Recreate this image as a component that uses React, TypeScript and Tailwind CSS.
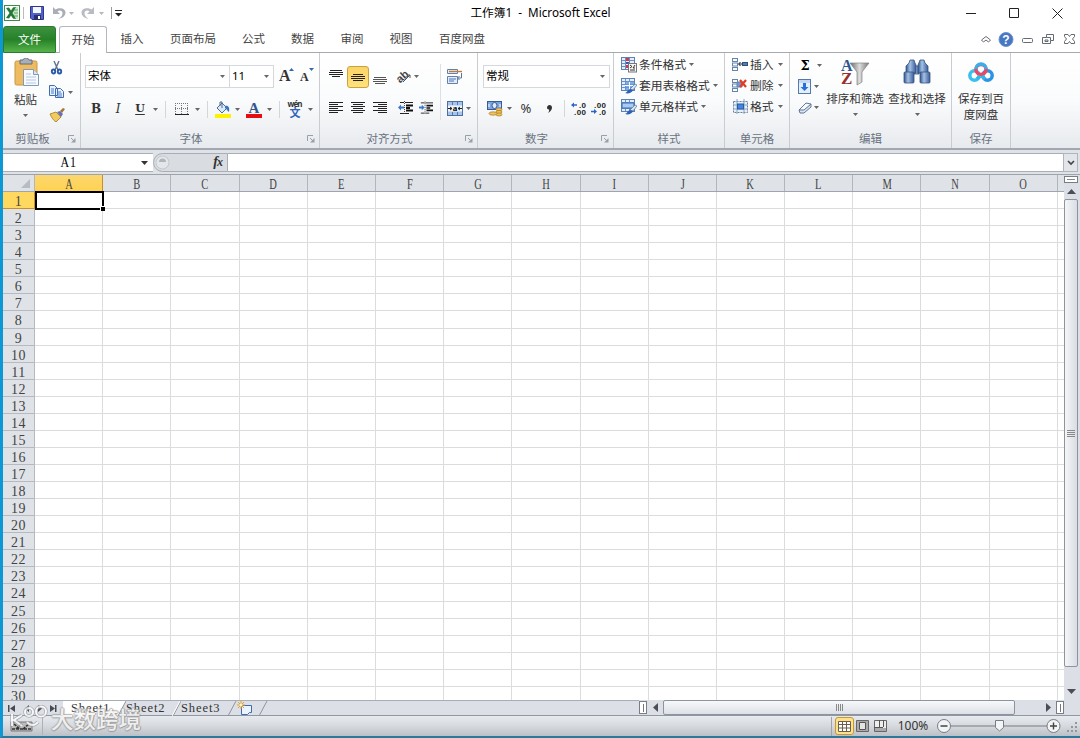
import React from 'react';

const columns = ['A', 'B', 'C', 'D', 'E', 'F', 'G', 'H', 'I', 'J', 'K', 'L', 'M', 'N', 'O'];
const rows = Array.from({ length: 30 }, (_, i) => i + 1);
const ui = "font-['Noto_Sans','Noto_Sans_CJK_SC',sans-serif]";
const song = "font-['Liberation_Serif','Noto_Sans_CJK_SC',serif]";

type BoxProps = { className?: string; children?: React.ReactNode };

const Cell = ({ className = '', children }: BoxProps) => (
    <div className={`flex shrink-0 items-center justify-center ${className}`}>{children}</div>
);

const Arrow = ({ className = 'w-[9px]', color = '#666' }: { className?: string; color?: string }) => (
    <Cell className={className}>
        <svg width="5" height="3" viewBox="0 0 5 3"><path d="M0 0h5L2.500 3z" fill={color} /></svg>
    </Cell>
);

const Sep = ({ className = 'w-[12px]' }: BoxProps) => (
    <Cell className={className}><div className="h-[17px] w-px bg-[#d3d6da]" /></Cell>
);

const Group = ({ className = '', label, launcher, children }: BoxProps & { label: string; launcher?: boolean }) => (
    <div className={`flex h-full shrink-0 flex-col border-r border-[#c9cdd2] ${className}`}>
        <div className="h-[77px]">{children}</div>
        <div className="flex h-[18px] items-center text-[11.5px] leading-none text-[#6a7380]">
            <div className="flex-1 text-center">{label}</div>
            {launcher && (
                <div className="w-[18px] pl-[6px]">
                    <svg width="8" height="8" viewBox="0 0 8 8" fill="none" stroke="#9aa0a8">
                        <path d="M.5 6V.5H6M3 3l3 3" /><path d="M7.500 3v4.500H3z" fill="#9aa0a8" stroke="none" />
                    </svg>
                </div>
            )}
        </div>
    </div>
);

const Combo = ({ className = '', text }: { className?: string; text: string }) => (
    <div className={`flex h-[23px] shrink-0 items-center border border-[#d5d9de] bg-white pl-[2px] text-[11.5px] text-black ${className}`}>
        <span className="flex-1 pb-[2px]">{text}</span>
        <Arrow className="w-[13px]" />
    </div>
);

// Horizontal strokes used by all paragraph alignment buttons
const Lines = ({ bars, color = '#222' }: { bars: number[][]; color?: string }) => (
    <svg width="14" height="14" viewBox="0 0 14 14" shapeRendering="crispEdges">
        {bars.map(([x, w, y], i) => <rect key={i} x={x} y={y} width={w} height="1" fill={color} />)}
    </svg>
);

const Indent = ({ flip }: { flip?: boolean }) => (
    <svg width="15" height="14" viewBox="0 0 15 14">
        <path d="M2 1.500h4M7 1.500h8M2 12.500h4M7 12.500h4" stroke="#222" />
        <path d="M8 4.500h7M8 7h4M8 9.500h7" stroke="#111" strokeWidth="1.800" />
        <path d="M6.500 0v14" stroke="#444" strokeDasharray="1 1" />
        <path d={flip ? 'M6 6.500 3 3.500v2H0v2h3v2z' : 'M0 6.500 3 3.500v2h3v2H3v2z'} fill="#3976d0" />
    </svg>
);

const TableBase = () => (
    <g>
        <rect x=".5" y=".5" width="13" height="12" fill="#e5effc" stroke="#5f82b6" />
        <path d="M1 3.500h12M1 6.500h12M1 9.500h12M4.500 1v11M8.500 1v11" stroke="#6b90c8" />
    </g>
);

const StyleIcon = ({ kind }: { kind: number }) => (
    <svg width="16" height="16" viewBox="0 0 16 16">
        <TableBase />
        {kind === 0 && <g><path d="M5 1h3v3H5zM5 8h3v3H5z" fill="#cf3b4b" /><path d="M5 5h3v2H5z" fill="#315eaa" /><rect x="7.500" y="6.500" width="8" height="8.500" fill="#f7f7f7" stroke="#777" /><path d="m9 8 2 1.500L9 11m5-3-2 3 2 0M9 13h5" fill="none" stroke="#333" /></g>}
        {kind === 1 && <g><path d="M4 4h9v8H4z" fill="#5b97e2" opacity=".75" /><path d="M4 7.500h9M8.500 4v8" stroke="#fff" /></g>}
        {kind === 2 && <path d="M1 4h12v5H1z" fill="#a9caf3" stroke="#386ab0" />}
        {kind > 0 && <g><path d="m9 11 5-5 2 1-4 5z" fill="#dce5ef" stroke="#53749c" strokeWidth=".7" /><path d="M4 15c2 0 2-3 5-4l3 1c-1 3-5 4-8 3z" fill="#2b62b7" /></g>}
    </svg>
);

const CellsIcon = ({ kind }: { kind: number }) => (
    <svg width="17" height="15" viewBox="0 0 17 15">
        {kind < 2 ? (
            <g fill="#f8fbff" stroke="#6685ad">
                <rect x=".5" y="1.500" width="5" height="3" /><rect x=".5" y="6" width="5" height="3" /><rect x=".5" y="10.500" width="5" height="3" />
                {kind === 0
                    ? <g><rect x="10.500" y="5.500" width="5" height="3" fill="#5c7ca8" stroke="#2d4f80" /><path d="M10 7H7m1.500-2L6.500 7l2 2" fill="none" stroke="#111" /></g>
                    : <g><path d="M5 4h5v5H5z" fill="#7098cf" /><path d="m8 2 6 7m0-7L8 9" stroke="#e33a25" strokeWidth="2.200" /></g>}
            </g>
        ) : (
            <g><path d="M1.500 2.500h14v11h-14z" fill="#e6effa" stroke="#66819f" strokeDasharray="2 1" /><path d="M1 6h15M1 10h15M5 0v15M12 0v15" stroke="#8ba3c2" /><rect x="5.500" y="5" width="6" height="5" fill="#4386df" stroke="#285aa5" /></g>
        )}
    </svg>
);

const Decimals = ({ less }: { less?: boolean }) => (
    <svg width="16" height="15" viewBox="0 0 16 15">
        <path d={less ? 'M6 10.500 3 8v1.700H0v1.600h3V13z' : 'M0 4 3 1.500v1.700h3v1.600H3v1.700z'} fill="#2c65c4" />
        <g fill="#222" fontSize="8" fontWeight="bold" fontFamily="Liberation Sans">
            <text x={less ? 3 : 8} y="7" textLength={less ? 12 : 7}>{less ? '.00' : '.0'}</text>
            <text x={less ? 8 : 3} y="14" textLength={less ? 7 : 12}>{less ? '.0' : '.00'}</text>
        </g>
    </svg>
);

const TitleBar = () => (
    <div className="flex h-[26px] shrink-0 items-center">
        <div className="flex w-[400px] items-center pl-[1px]">
            <svg width="16" height="16" viewBox="0 0 16 16">
                <rect x=".5" y=".5" width="15" height="15" fill="#fff" stroke="#3f8c46" /><path d="M9 2h5v12H9z" fill="#c9e5c7" /><path d="M10 5h4M10 8h4M10 11h4" stroke="#67a767" />
                <path d="m2 3 3-.5 2 3 2-3 3-.5-3.500 6L12 14l-3-.5-2-3-2 3-3-.5 3.500-5z" fill="#217a36" />
            </svg>
            <div className="ml-[3px] h-[12px] w-px bg-[#bbb]" />
            <svg className="ml-[6px]" width="14" height="14" viewBox="0 0 14 14">
                <path d="M.5.500h13v13H2L.5 12z" fill="#5261c7" stroke="#30358c" /><path d="M3 1h8v6H3z" fill="#f2f7ff" /><path d="M4 9h7v5H4z" fill="#26306f" /><path d="M8 10h2v3H8z" fill="#fff" />
            </svg>
            <svg className="ml-[8px]" width="14" height="13" viewBox="0 0 14 13"><path d="M1 0v7h7L5.500 4.500c2-2 5-1 5 1.500 0 3-2 4-4 6 4-1 7-3 7-6.500C13.500 1 7 0 3.500 2.500z" fill="#a9aeb6" /></svg>
            <Arrow className="w-[11px]" color="#b5b8bd" />
            <svg className="ml-[4px] -scale-x-100" width="14" height="13" viewBox="0 0 14 13"><path d="M1 0v7h7L5.500 4.500c2-2 5-1 5 1.500 0 3-2 4-4 6 4-1 7-3 7-6.500C13.500 1 7 0 3.500 2.500z" fill="#b8bcc2" /></svg>
            <Arrow className="w-[13px]" color="#b5b8bd" />
            <div className="ml-[3px] h-[12px] w-px bg-[#999]" />
            <svg className="ml-[3px]" width="7" height="7" viewBox="0 0 7 7"><path d="M0 0h7v1H0zM0 3h7L3.500 6.500z" fill="#222" /></svg>
        </div>
        <div className="w-[275px] text-center text-[11.7px] text-black">工作簿1&nbsp; -&nbsp; Microsoft Excel</div>
        <svg className="ml-auto mr-[17px]" width="97" height="12" viewBox="0 0 97 12" fill="none" stroke="#222">
            <path d="M0 6.500h10M43.500 1.500h9v9h-9zM86.500 1.500l10 10m0-10-10 10" />
        </svg>
    </div>
);

const Tabs = () => (
    <div className="flex h-[27px] shrink-0 items-end text-[11.5px] text-[#444]">
        <div className="flex h-full w-[53px] items-center justify-center rounded-t-[3px] border border-[#287c2c] bg-linear-to-b from-[#3d9140] via-[#268129] to-[#55b349] text-white">文件</div>
        <div className="h-px w-[3px] bg-[#a5aab1]" />
        <div className="flex h-full w-[48px] items-center justify-center rounded-t-[3px] border border-b-0 border-[#b4b8be] bg-white">开始</div>
        <div className="flex h-full flex-1 items-center border-b border-[#a5aab1]">
            <Cell className="w-[50px]">插入</Cell>
            <Cell className="w-[72px]">页面布局</Cell>
            <Cell className="w-[49px]">公式</Cell>
            <Cell className="w-[49px]">数据</Cell>
            <Cell className="w-[50px]">审阅</Cell>
            <Cell className="w-[48px]">视图</Cell>
            <Cell className="w-[74px]">百度网盘</Cell>
            <svg className="ml-auto mr-[4px]" width="96" height="17" viewBox="0 0 96 17" fill="none" stroke="#666b73">
                <path d="M1.500 9 6 5.500 10.500 9l-2 2L6 9l-2.500 2z" />
                <circle cx="26" cy="8.500" r="7" fill="#4677c5" stroke="#6d92cb" />
                <text x="22.300" y="13" fill="#fff" stroke="none" fontSize="12" fontWeight="bold" fontFamily="Liberation Sans">?</text>
                <rect x="42.500" y="7.500" width="10" height="4" rx="1" />
                <path d="M66.500 3.500h7v6h-3v3h-8v-6h4zM66.500 6.500h4v3M65 9h3v1.500h-3z" />
                <path d="m84.500 3.500 3.500 0 1.500 2 1.500-2h3.500v2l-2 2.500 2 2.500v2h-3.500l-1.500-2-1.500 2h-3.500v-2l2-2.500-2-2.500z" />
            </svg>
        </div>
    </div>
);

const Ribbon = () => (
    <div className="flex h-[97px] shrink-0 border-b-2 border-[#a3a8b0] bg-linear-to-b from-white via-[#fafbfc] to-[#e7eaee] text-[#333]">
        <Group className="w-[78px]" label="剪贴板" launcher>
            <div className="flex">
                <div className="flex w-[45px] flex-col items-center pt-[5px]">
                    <svg className="ml-[3px]" width="27" height="30" viewBox="0 0 27 30">
                        <rect x="1" y="3" width="22" height="24" rx="1.500" fill="#efbb61" stroke="#c99747" />
                        <path d="M6 2h3c1-3 5-3 6 0h3v4H6z" fill="#a9afb7" stroke="#656d77" />
                        <path d="M9.500 11.500h10l5 5v11h-15z" fill="#f7faff" stroke="#8499b7" /><path d="M19.500 11.500v5h5" fill="#dbe7f5" stroke="#8499b7" />
                        <path d="M12 16h5m-5 3h10m-10 3h10m-10 3h10" stroke="#b3c6e1" />
                    </svg>
                    <span className="mt-[5px] text-[11.5px] leading-[14px]">粘贴</span>
                    <Arrow className="mt-[6px] h-[5px] w-[9px]" />
                </div>
                <div className="flex flex-1 flex-col pl-px pt-[7px]">
                    <svg className="ml-[1px]" width="14" height="16" viewBox="0 0 14 16" fill="none">
                        <path d="m4 1 4 9M9 1 5 10" stroke="#5e7290" strokeWidth="1.400" /><ellipse cx="3.500" cy="11.500" rx="1.700" ry="2" stroke="#2c59a8" strokeWidth="1.900" /><ellipse cx="9.500" cy="11.500" rx="1.700" ry="2" stroke="#2c59a8" strokeWidth="1.900" />
                    </svg>
                    <div className="mt-[9px] flex items-center">
                        <svg width="16" height="15" viewBox="0 0 16 15"><path d="M.5.500h5l3 3v7h-8zM6.500 3.500h5l3 3v6h-8z" fill="#e8f1ff" stroke="#416cad" /><path d="M2 4h3M2 6h3M2 8h3M8 7h4m-4 2h5m-5 2h5" stroke="#4b7bc3" /></svg>
                        <Arrow className="w-[11px]" />
                    </div>
                    <svg className="mt-[8px]" width="16" height="14" viewBox="0 0 16 14"><path d="m1 6 6-2 5 5-5 5C4 12 3 10 1 6z" fill="#efcc62" stroke="#b68b31" /><path d="m8 4 3-1 3 3-2 3z" fill="#6570b4" /><path d="m11 3 3-3 2 1-3 4z" fill="#a27435" /></svg>
                </div>
            </div>
        </Group>
        <Group className="w-[239px]" label="字体" launcher>
            <div className="flex h-[35px] items-end pl-[4px]">
                <Combo className="w-[145px]" text="宋体" />
                <Combo className="-ml-px w-[45px]" text="11" />
                <Cell className="h-[23px] w-[24px] pb-[3px]"><svg width="16" height="16" viewBox="0 0 16 16"><text x="1" y="14" fontSize="16" fontWeight="bold" fontFamily="Liberation Serif" fill="#333">A</text><path d="m11 4 2.500-3L16 4z" fill="#3567b1" /></svg></Cell>
                <Cell className="h-[23px] w-[17px] pb-[3px]"><svg width="16" height="16" viewBox="0 0 16 16"><text x="1" y="14" fontSize="12" fontWeight="bold" fontFamily="Liberation Serif" fill="#333">A</text><path d="m10 1 2.500 3L15 1z" fill="#3567b1" /></svg></Cell>
            </div>
            <div className="flex h-[42px] items-center pl-[4px]">
                <Cell className="w-[22px] font-['DejaVu_Serif',serif] text-[12px] font-bold">B</Cell>
                <Cell className="w-[22px] font-['DejaVu_Serif',serif] text-[12px] italic">I</Cell>
                <Cell className="w-[22px] font-['DejaVu_Serif',serif] text-[11px] font-bold underline underline-offset-2">U</Cell>
                <Arrow className="w-[8px]" />
                <Sep />
                <Cell className="w-[21px]"><svg width="14" height="14" viewBox="0 0 14 14" fill="none"><path d="M.5 1v11M6.500 1v11M12.500 1v11M0 1.500h13M0 6.500h13" stroke="#777" strokeDasharray="1 1" /><path d="M0 12.500h14" stroke="#222" /></svg></Cell>
                <Arrow className="w-[10px]" />
                <Sep className="w-[10px]" />
                <Cell className="w-[21px]"><svg width="16" height="17" viewBox="0 0 16 17"><path d="m2 7 5-5 5 5-5 5z" fill="#dce9f6" stroke="#4c6b95" /><path d="M5 5V1h2v6" fill="none" stroke="#4c6b95" /><path d="M10 5c3-1 5 1 4 6-2-1-2-3-4-4z" fill="#3974bd" /><path d="M0 13h16v4H0z" fill="#fff200" /></svg></Cell>
                <Arrow />
                <Cell className="w-[23px]"><svg width="16" height="17" viewBox="0 0 16 17"><text x="2.500" y="12" fontSize="15" fontWeight="bold" fontFamily="Liberation Serif" fill="#32558d">A</text><path d="M0 13h16v4H0z" fill="#e60c12" /></svg></Cell>
                <Arrow className="w-[8px]" />
                <Sep />
                <Cell className="w-[20px]">
                    <svg className="overflow-visible" width="18" height="17" viewBox="0 0 18 17">
                        <text x="1.500" y="6" fontSize="8" fontWeight="bold" fontFamily="Noto Sans" fill="#333" textLength="15">wén</text>
                        <text x="3.500" y="16" fontSize="11" fontWeight="bold" fontFamily="Noto Sans CJK SC" fill="#3164bc">文</text>
                    </svg>
                </Cell>
                <Arrow className="w-[10px]" />
            </div>
        </Group>
        <Group className="w-[158px]" label="对齐方式" launcher>
            <div className="flex">
                <div className="flex w-[114px] flex-col pl-[5px]">
                    <div className="mt-[12px] flex h-[23px] items-center">
                        <Cell className="w-[22px]"><Lines bars={[[1, 12, 0], [0, 14, 2], [0, 14, 4], [3, 8, 6]]} /></Cell>
                        <Cell className="h-[22px] w-[22px] rounded-[3px] border border-[#c9a23e] bg-linear-to-b from-[#fbd468] to-[#ffe17a]"><Lines bars={[[2, 10, 4], [0, 14, 6], [0, 14, 8], [2, 10, 10]]} /></Cell>
                        <Cell className="w-[22px]"><Lines color="#555" bars={[[1, 12, 7], [0, 14, 9], [0, 14, 11], [2, 10, 13]]} /></Cell>
                        <Cell className="w-[21px] justify-end">
                            <svg className="overflow-visible" width="15" height="15" viewBox="0 0 15 15"><text x="0" y="11" transform="rotate(-42 6 9)" fontSize="11" fontWeight="bold" fontFamily="Liberation Sans" fill="#444">ab</text><path d="m6 13 7-7m-3 0h3v3" fill="none" stroke="#555" /></svg>
                        </Cell>
                        <Arrow />
                    </div>
                    <div className="flex h-[40px] items-center">
                        <Cell className="w-[22px]"><Lines bars={[[0, 14, 1], [0, 9, 3], [0, 14, 5], [0, 9, 7], [0, 14, 9], [0, 9, 11]]} /></Cell>
                        <Cell className="w-[22px]"><Lines bars={[[0, 14, 1], [2, 10, 3], [0, 14, 5], [2, 10, 7], [0, 14, 9], [2, 10, 11]]} /></Cell>
                        <Cell className="w-[22px]"><Lines bars={[[0, 14, 1], [5, 9, 3], [0, 14, 5], [5, 9, 7], [0, 14, 9], [5, 9, 11]]} /></Cell>
                        <Cell className="w-[28px]"><Indent /></Cell>
                        <Cell className="w-[14px]"><Indent flip /></Cell>
                    </div>
                </div>
                <Cell className="h-[77px] w-[12px]"><div className="h-[56px] w-px bg-[#dcdfe3]" /></Cell>
                <div className="flex flex-col">
                    <Cell className="mt-[12px] h-[23px] w-[18px]"><svg width="16" height="15" viewBox="0 0 16 15" fill="none"><path d="M.5.500h10v4H.5zM.5 7.500h10v7H.5z" fill="#e3ecf9" stroke="#637fae" /><path d="M2 2.500h13" stroke="#c77a32" strokeWidth="1.400" /><path d="M2 10h7M2 12h5" stroke="#4b72bb" /><path d="M14.500 4v5h-4m2-2-2 2 2 2" stroke="#55779f" /></svg></Cell>
                    <div className="flex h-[40px] items-center">
                        <Cell className="w-[18px]"><svg width="16" height="15" viewBox="0 0 16 15"><rect x=".5" y=".5" width="15" height="14" fill="#a6c5ed" stroke="#506f9e" /><path d="M1 4.500h14v6H1z" fill="#eef5ff" /><path d="M5.500 1v3M10.500 1v3M5.500 11v3M10.500 11v3" stroke="#5578ad" /><path d="M1 7.500h4m6 0h4M3 6l2 1.500L3 9m10-3-2 1.500L13 9" fill="none" stroke="#222" /><text x="5.800" y="10" fontSize="9" fontWeight="bold" fontFamily="Liberation Serif">a</text></svg></Cell>
                        <Arrow />
                    </div>
                </div>
            </div>
        </Group>
        <Group className="w-[136px]" label="数字" launcher>
            <div className="flex h-[35px] items-end pl-[5px]"><Combo className="w-[127px]" text="常规" /></div>
            <div className="flex h-[41px] items-center pl-[6px]">
                <Cell className="w-[21px]"><svg width="16" height="16" viewBox="0 0 16 16"><rect x=".5" y=".5" width="14" height="8" fill="#7ea6df" stroke="#385b94" /><ellipse cx="7.500" cy="4.500" rx="2.500" ry="3" fill="#dfecff" stroke="#345a96" /><path d="M2 3v3M13 3v3" stroke="#fff" /><g fill="#efc45a" stroke="#a97925" strokeWidth=".7"><ellipse cx="12" cy="8.500" rx="3" ry="1.500" /><ellipse cx="12" cy="11" rx="3" ry="1.500" /><ellipse cx="12" cy="13.500" rx="3" ry="1.500" /><ellipse cx="6" cy="12.500" rx="4" ry="1.700" /></g></svg></Cell>
                <Arrow className="w-[8px]" />
                <Cell className="w-[26px] text-[13px]">%</Cell>
                <Cell className="w-[20px]"><svg width="5" height="8" viewBox="0 0 5 8"><path d="M2.500 0C4 0 5 1 5 2.500 5 5 3 7 1 8c1-1.500 1.500-2.500 1-3.500C.7 4.500 0 3.500 0 2.500S1 0 2.500 0z" fill="#333" /></svg></Cell>
                <Sep className="w-[10px]" />
                <Cell className="w-[19px]"><Decimals /></Cell>
                <Cell className="w-[22px]"><Decimals less /></Cell>
            </div>
        </Group>
        <Group className="w-[111px]" label="样式">
            <div className="flex flex-col pl-[7px] pt-[1px] text-[11.800px] leading-none">
                {['条件格式', '套用表格格式', '单元格样式'].map((text, i) => (
                    <div key={text} className="flex h-[21px] items-center"><StyleIcon kind={i} /><span className="ml-[2px] whitespace-nowrap">{text}</span><Arrow className="ml-px w-[9px]" /></div>
                ))}
            </div>
        </Group>
        <Group className="w-[65px]" label="单元格">
            <div className="flex flex-col pl-[7px] pt-[1px] text-[11.800px] leading-none">
                {['插入', '删除', '格式'].map((text, i) => (
                    <div key={text} className="flex h-[21px] items-center"><CellsIcon kind={i} /><span className="ml-px whitespace-nowrap">{text}</span><Arrow className="ml-px w-[11px]" /></div>
                ))}
            </div>
        </Group>
        <Group className="w-[162px]" label="编辑">
            <div className="flex">
                <div className="flex w-[34px] flex-col pt-[2px]">
                    <div className="flex h-[21px] items-center"><Cell className="w-[25px] pl-[5px] font-['DejaVu_Serif',serif] text-[13px] font-bold text-black">Σ</Cell><Arrow /></div>
                    <div className="flex h-[21px] items-center pl-[8px]"><svg width="14" height="15" viewBox="0 0 14 15"><rect x=".5" y=".5" width="12" height="14" fill="#e5f0ff" stroke="#5778ab" /><path d="M1 1h11v3H1z" fill="#c7d9f0" /><path d="M5 4h3v4h2.500l-4 4-4-4H5z" fill="#2870d8" /></svg><Arrow /></div>
                    <div className="flex h-[21px] items-center pl-[8px]"><svg width="14" height="14" viewBox="0 0 14 14"><path d="m1 9 7-7 5 1-7 7z" fill="#f7f9fc" stroke="#617698" /><path d="M1 9h5l7-6v3l-7 6H2z" fill="#dbe5f2" stroke="#617698" /></svg><Arrow /></div>
                </div>
                <div className="flex w-[62px] flex-col items-center pt-[5px]">
                    <svg className="overflow-visible" width="30" height="28" viewBox="0 0 30 28">
                        <defs><linearGradient id="funnel"><stop stopColor="#666" /><stop offset=".5" stopColor="#ddd" /><stop offset="1" stopColor="#777" /></linearGradient></defs>
                        <path d="M10 5h19l-7 9v10l-5 3V14z" fill="url(#funnel)" stroke="#858585" strokeWidth=".7" />
                        <text x="1" y="13" fontSize="16" fontWeight="bold" fontFamily="Liberation Serif" fill="#2d5593">A</text><text x="1" y="26" fontSize="17" fontWeight="bold" fontFamily="Liberation Serif" fill="#96312b">Z</text>
                    </svg>
                    <span className="mt-[6px] whitespace-nowrap text-[11.500px] leading-[14px]">排序和筛选</span>
                    <Arrow className="mt-[6px] h-[5px] w-[9px]" />
                </div>
                <div className="flex w-[62px] flex-col items-center pt-[5px]">
                    <svg width="28" height="28" viewBox="0 0 28 28">
                        <defs><linearGradient id="glass"><stop stopColor="#32548b" /><stop offset=".4" stopColor="#a5c1e6" /><stop offset="1" stopColor="#3a5b98" /></linearGradient></defs>
                        <g fill="url(#glass)" stroke="#365684" strokeWidth=".8"><path d="M11 8h5v8h-5z" /><path d="M7 2h4l1 3 1 2v8H3V8l3-3z" /><path d="M17 2h4l1 3 3 3v7H15V7z" /><rect x="1" y="14" width="10" height="11" rx="1" /><rect x="17" y="14" width="10" height="11" rx="1" /></g>
                    </svg>
                    <span className="mt-[6px] whitespace-nowrap text-[11.500px] leading-[14px]">查找和选择</span>
                    <Arrow className="mt-[6px] h-[5px] w-[9px]" />
                </div>
            </div>
        </Group>
        <Group className="w-[59px]" label="保存">
            <div className="flex flex-col items-center pt-[8px]">
                <svg width="26" height="22" viewBox="0 0 26 22" fill="none" strokeWidth="3.500">
                    <circle cx="6.500" cy="14.500" r="4.700" stroke="#3ac0ea" /><circle cx="19.500" cy="14.500" r="4.700" stroke="#2b94e3" /><circle cx="13" cy="8.500" r="5" stroke="#ed4861" /><path d="M8 8a5 5 0 0 1 10 0" stroke="#3dafe7" /><path d="m9 18 3-3M17 18l-3-3" stroke="#35b6e9" />
                </svg>
                <div className="mt-[8px] text-center text-[11.500px] leading-[16px]">保存到百<br />度网盘</div>
            </div>
        </Group>
    </div>
);

const FormulaBar = () => (
    <div className="flex h-[25px] shrink-0 items-center border-b border-[#9da3ab] bg-[#dfe3e8] pb-px pt-[2px]">
        <div className="flex h-[19px] w-[150px] items-center border-y border-[#a9aeb6] bg-white">
            <div className={`flex w-[132px] justify-center text-[14px] leading-none tracking-[1px] text-black ${song}`}>
                <span className="scale-x-[.85]">A1</span>
            </div>
            <svg className="ml-[6px]" width="7" height="4" viewBox="0 0 7 4"><path d="M0 0h7L3.500 4z" fill="#333" /></svg>
        </div>
        <div className="flex h-[19px] w-[75px] items-center rounded-l-full border border-[#a9aeb6] bg-[#d9dde2]">
            <svg className="ml-px" width="15" height="15" viewBox="0 0 15 15"><circle cx="7.500" cy="7.500" r="6.500" fill="#e4e7ea" stroke="#c4c8cd" /><path d="M4 7a3.500 3.500 0 0 1 7 0z" fill="#b0b5bc" /></svg>
            <span className="ml-auto pb-[1px] pr-[5px] font-['Liberation_Serif',serif] text-[14px] font-bold italic leading-none tracking-[-1px] text-[#333]">f<span className="text-[12px]">x</span></span>
        </div>
        <div className="h-[19px] flex-1 border-y border-[#a9aeb6] bg-white" />
        <Cell className="mr-[2px] h-[19px] w-[15px] border border-[#b0b5bd] bg-[#e2e6eb]">
            <svg width="8" height="6" viewBox="0 0 8 6"><path d="m1 1 3 3 3-3" fill="none" stroke="#444" strokeWidth="1.600" /></svg>
        </Cell>
    </div>
);

const Sheet = () => (
    <div className="flex h-[525px] shrink-0 overflow-hidden">
        <div className="flex w-[1061px] flex-col overflow-hidden bg-white">
            <div className={`flex h-[17px] shrink-0 border-b border-[#9ea5ae] bg-[#dfe3e8] text-[14px] text-[#444] ${song}`}>
                <div className="flex w-[32px] shrink-0 items-end justify-end border-r border-[#b1b6bd] pb-[3px] pr-[4px]">
                    <svg width="9" height="9" viewBox="0 0 9 9"><path d="M9 0v9H0z" fill="#b7bcc4" /></svg>
                </div>
                {columns.map((c) => (
                    <Cell key={c} className={`w-[68.200px] border-r pt-[4px] ${c === 'A' ? 'border-[#c98d2a] bg-linear-to-b from-[#fbd76f] to-[#ffd24f]' : 'border-[#b1b6bd]'}`}>
                        <span className="scale-x-[.75] leading-none">{c}</span>
                    </Cell>
                ))}
            </div>
            {rows.map((r) => (
                <div key={r} className="flex h-[17.070px] shrink-0">
                    <div className={`flex w-[32px] shrink-0 items-center justify-center border-b border-r pt-[4px] text-[14px] leading-none tracking-[0.500px] text-[#444] ${song} ${r === 1 ? 'border-[#c98d2a] bg-[#ffd95f]' : 'border-[#b5bac1] bg-[#dfe3e8]'}`}>{r}</div>
                    {columns.map((c) => (
                        <div key={c} className={`w-[68.200px] shrink-0 border-b border-r border-[#dadcdd] ${r === 1 && c === 'A' ? 'relative z-10' : ''}`}>
                            {r === 1 && c === 'A' && (
                                <div className="absolute -right-[2px] -top-px bottom-[-2px] left-0 border-2 border-black">
                                    <div className="absolute -bottom-[3px] -right-[3px] h-[5px] w-[5px] border-l border-t border-white bg-black" />
                                </div>
                            )}
                        </div>
                    ))}
                    <div className="flex-1 border-b border-[#dadcdd]" />
                </div>
            ))}
        </div>
        <div className="flex w-[14px] flex-col items-center bg-[#dce0e6]">
            <div className="mt-px flex h-[7px] w-[14px] shrink-0 items-center justify-center border border-[#777e88] bg-white"><div className="h-px w-[8px] bg-[#888]" /></div>
            <Cell className="h-[16px] w-[14px]"><svg width="9" height="5" viewBox="0 0 9 5"><path d="m0 5 4.500-5L9 5z" fill="#4b4f55" /></svg></Cell>
            <div className="flex h-[468px] w-[14px] shrink-0 items-center justify-center rounded-[2px] border border-[#8d949e] bg-linear-to-r from-[#f5f6f8] to-[#d9dde3]">
                <div className="flex flex-col gap-px"><i className="h-px w-[8px] bg-[#888]" /><i className="h-px w-[8px] bg-[#888]" /><i className="h-px w-[8px] bg-[#888]" /><i className="h-px w-[8px] bg-[#888]" /></div>
            </div>
            <Cell className="mt-auto h-[18px] w-[14px]"><svg width="9" height="5" viewBox="0 0 9 5"><path d="M0 0h9L4.500 5z" fill="#4b4f55" /></svg></Cell>
        </div>
        <div className="flex-1 bg-[#dce0e6]" />
    </div>
);

const SheetTabs = () => (
    <div className="flex h-[16px] shrink-0 items-center border-b border-[#9097a1] bg-[#dce0e6]">
        <div className={`flex h-full w-[636px] items-center border-t border-[#a7adb5] text-[12.500px] leading-none tracking-[0.900px] text-[#333] ${song}`}>
            <svg width="60" height="15" viewBox="0 0 60 15" fill="#474b52">
                <path d="M5 4h1.500v7H5zM12 4v7L7 7.500zM26 4v7l-4-3.500zM35 4v7l4-3.500zM47 4v7l5-3.500zM52 4h1.500v7H52z" />
            </svg>
            <div className="flex h-[15px] w-[54px] items-center bg-white pl-[8px]">Sheet1</div>
            <svg width="9" height="15" viewBox="0 0 9 15"><path d="M0 0h9L1 15H0z" fill="#fff" /><path d="M9 0 1 15" stroke="#8e959e" /></svg>
            <span className="w-[46px]">Sheet2</span>
            <svg width="9" height="15" viewBox="0 0 9 15"><path d="M9 0 1 15" stroke="#8e959e" /><path d="M8 0 0 15" stroke="#fff" /></svg>
            <span className="w-[46px]">Sheet3</span>
            <svg width="42" height="15" viewBox="0 0 42 15" fill="none">
                <path d="M9 0 1 15M40 0l-8 15" stroke="#8e959e" /><path d="M14.500 4.500h10v7h-2l-2 2h-6z" fill="#eaf3ff" stroke="#416caa" />
                <path d="M14 0v8M10 4h8m-7-3 6 6m0-6-6 6" stroke="#e1a02d" /><circle cx="14" cy="4" r="1.500" fill="#fff3bc" />
            </svg>
        </div>
        <Cell className="h-[13px] w-[8px] border border-[#777e88] bg-white"><div className="h-[8px] w-px bg-[#777]" /></Cell>
        <Cell className="w-[16px]"><svg width="5" height="9" viewBox="0 0 5 9"><path d="M5 0v9L0 4.500z" fill="#4b4f55" /></svg></Cell>
        <div className="flex h-[15px] w-[352px] items-center justify-center gap-px rounded-[2px] border border-[#8d949e] bg-linear-to-b from-[#f7f8fa] to-[#dce0e6]">
            <i className="h-[7px] w-px bg-[#888]" /><i className="h-[7px] w-px bg-[#888]" /><i className="h-[7px] w-px bg-[#888]" /><i className="h-[7px] w-px bg-[#888]" />
        </div>
        <Cell className="ml-[28px] w-[10px]"><svg width="5" height="9" viewBox="0 0 5 9"><path d="M0 0v9l5-4.500z" fill="#4b4f55" /></svg></Cell>
        <Cell className="ml-[3px] h-[13px] w-[8px] border border-[#777e88] bg-white"><div className="h-[8px] w-px bg-[#777]" /></Cell>
    </div>
);

const StatusBar = () => (
    <div className="flex h-[20px] shrink-0 items-center bg-linear-to-b from-[#e7eaee] via-[#d6d9dd] to-[#bcc1c8]">
        <svg className="ml-[7px]" width="23" height="13" viewBox="0 0 23 13" fill="none"><path d="M1 2h21v9H1z" fill="#bbb" stroke="#777" /><path d="m4 4 6 5m-4 0 5-5m2 5 6-5M2 9h19" stroke="#333" strokeWidth="1.500" strokeDasharray="3 1" /></svg>
        <div className="ml-[9px] h-[18px] w-px bg-[#adb2b9]" />
        <div className="ml-auto h-[19px] w-px bg-[#9ea3aa]" />
        <Cell className="ml-[3px] h-[18px] w-[19px] rounded-[3px] border border-[#c59735] bg-[#ffe18b]"><svg width="13" height="11" viewBox="0 0 13 11"><path d="M.5.500h12v10H.5zM1 3.500h11M1 7h11M4.500 1v9M8.500 1v9" fill="#fff" stroke="#69604a" /></svg></Cell>
        <Cell className="w-[17px]"><svg width="13" height="12" viewBox="0 0 13 12"><path d="M.5.500h12v11H.5z" fill="#aaa" stroke="#666" /><path d="M3.500 2.500h6v7h-6z" fill="#e4e4e4" stroke="#555" /></svg></Cell>
        <Cell className="w-[18px]"><svg width="13" height="12" viewBox="0 0 13 12"><path d="M.5.500h12v11H.5z" fill="#eee" stroke="#666" /><path d="M5.500 0v7M9.500 0v7M0 7.500h9" stroke="#555" /><path d="M1 8h11v3H1z" fill="#aaa" /></svg></Cell>
        <Cell className="ml-[8px] w-[32px] text-[12px] text-[#333]">100%</Cell>
        <svg className="ml-[7px]" width="126" height="16" viewBox="0 0 126 16" fill="none" stroke="#777d85">
            <path d="M15 8h96" /><g fill="#f3f4f6"><circle cx="8" cy="8" r="6.500" /><circle cx="117.500" cy="8" r="6.500" /><path d="M59.500 2.500h8v7l-4 3.500-4-3.500z" /></g><path d="M4.500 8h7M114 8h7m-3.500-3.500v7" stroke="#444" strokeWidth="1.400" />
        </svg>
        <svg className="ml-[2px] mr-[2px]" width="14" height="16" viewBox="0 0 14 16" fill="#9298a1"><path d="M11 4h2v2h-2zM7 8h2v2H7zM11 8h2v2h-2zM3 12h2v2H3zM7 12h2v2H7zM11 12h2v2h-2z" /></svg>
    </div>
);

const Watermark = () => (
    <div className="pointer-events-none absolute left-[6px] top-[704px] flex items-center opacity-80">
        <svg width="40" height="27" viewBox="0 0 40 27" fill="none" stroke="#9c9fa3" strokeWidth="3.500">
            <g id="mark"><path d="M3 9v12M13 10 5 15l8 6" /><circle cx="20" cy="7" r="4" /><circle cx="32" cy="6.500" r="5" /><path d="M18 17c3 4 8 4 11 0" /></g>
            <use href="#mark" stroke="#fff" strokeWidth="2" />
        </svg>
        <span className="ml-[2px] whitespace-nowrap font-['Noto_Sans_CJK_SC',sans-serif] text-[22.500px] font-medium leading-[28px] text-[#f4f4f4] [text-shadow:1px_0_1px_#888,-1px_0_1px_#aaa,0_1px_1px_#888,0_-1px_1px_#aaa]">大数跨境</span>
    </div>
);

export default function App() {
    return (
        <div className={`relative flex h-[738px] w-[1080px] flex-col overflow-hidden border-b-2 border-l-[3px] border-b-[#28799a] border-l-[#0c98d5] bg-white ${ui}`}>
            <TitleBar />
            <Tabs />
            <Ribbon />
            <FormulaBar />
            <Sheet />
            <SheetTabs />
            <StatusBar />
            <Watermark />
        </div>
    );
}
